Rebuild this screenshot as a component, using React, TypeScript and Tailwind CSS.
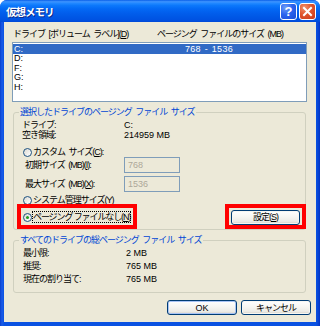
import React from "react";

const FONT = "font-['Liberation_Sans','Noto_Sans_CJK_JP',sans-serif]";
const NUM = "tracking-normal [word-spacing:0px]";

function U({ c }: { c: string }) {
  return <span className="underline underline-offset-[1px]">{c}</span>;
}

function Radio({ checked }: { checked?: boolean }) {
  return (
    <span className="w-[9px] h-[9px] rounded-full border border-[#1C5180] bg-[linear-gradient(135deg,#DCDBD3,#FFFFFF)] flex items-center justify-center shrink-0">
      {checked && <span className="w-[3px] h-[3px] rounded-full bg-[#21A121]" />}
    </span>
  );
}

function XPButton({ children, w, def }: { children: React.ReactNode; w: string; def?: boolean }) {
  return (
    <div
      className={`${w} h-[15px] rounded-[3px] border border-[#003C74] bg-[linear-gradient(180deg,#FFFFFF_0%,#F6F6F2_45%,#ECEBE6_80%,#D6D0C5_100%)] flex items-center justify-center text-black ${
        def ? "shadow-[inset_0_0_0_1px_#A8C4F5]" : "shadow-[inset_0_0_0_1px_#F6F6F2]"
      }`}
    >
      {children}
    </div>
  );
}

export default function App() {
  const rows = ["C:", "D:", "F:", "G:", "H:"];
  return (
    <div className={`${FONT} text-[9px] leading-[10px] text-black w-[320px] h-[326px] flex flex-col rounded-t-[7px] overflow-hidden bg-[linear-gradient(90deg,#0A3FCB_0px,#1A5BE8_2px,#0A52E2_4px,#0A52E2_316px,#0745D6_318px,#0333C4_320px)]`}>
      {/* Title bar */}
      <div className="h-[22px] shrink-0 flex items-center pl-[6px] pr-[4px] bg-[linear-gradient(180deg,#0A5FE8_0%,#3E95FF_8%,#2188FF_15%,#0C78FB_25%,#0369F5_40%,#0260EE_55%,#0058E6_75%,#0052E2_90%,#0049D8_100%)]">
        <span className="text-white font-bold text-[10.5px] tracking-[-1px] [text-shadow:1px_1px_0_#0A2A8A] mt-[1px]">仮想メモリ</span>
        <div className="ml-auto flex gap-[2px] mt-[1px]">
          <div className="w-[17px] h-[17px] rounded-[3px] border border-white bg-[radial-gradient(circle_at_30%_25%,#6E9EF8_0%,#2C64EE_45%,#1A4DD6_100%)] flex items-center justify-center">
            <span className="text-white font-bold text-[13px] leading-[13px] font-['Liberation_Sans',sans-serif]">?</span>
          </div>
          <div className="w-[17px] h-[17px] rounded-[3px] border border-white bg-[radial-gradient(circle_at_30%_25%,#F0926C_0%,#E0552D_45%,#C8391A_100%)] flex items-center justify-center">
            <svg width="11" height="11" viewBox="0 0 11 11">
              <path d="M2 2 L9 9 M9 2 L2 9" stroke="white" strokeWidth="2" strokeLinecap="square" />
            </svg>
          </div>
        </div>
      </div>

      {/* Client */}
      <div className="relative flex-1 mx-[4px] mb-[4px] bg-[#ECE9D8] pl-[8px] pr-[9px] pt-[7px] flex flex-col tracking-[-1px] [word-spacing:2px]">
        <div className="h-[10px] flex items-center">
          <span className="ml-[1px] w-[144px] shrink-0">ドライブ [ボリューム ラベル](<U c="D" />)</span>
          <span>ページング ファイルのサイズ (MB)</span>
        </div>

        <div className="mt-[3px] h-[60px] border border-[#7F9DB9] bg-white pt-[1px] flex flex-col">
          {rows.map((r, i) => (
            <div
              key={r}
              className={`h-[9.5px] flex items-center ${NUM} ${i === 0 ? "bg-[#316AC5] text-white" : ""}`}
            >
              <span className="pl-[1px] w-[172px] shrink-0">{r}</span>
              {i === 0 && <span className="tracking-[0.3px] [word-spacing:1px]">768 - 1536</span>}
            </div>
          ))}
        </div>

        {/* Group 1 */}
        <div className="relative mt-[10px] mx-[1px] border border-[#D0D0BF] rounded-[3px] pt-[7px] pl-[8px] pr-[5px] pb-[4px] flex flex-col">
          <span className="absolute left-[5px] top-[-6px] bg-[#ECE9D8] px-[1px] text-[#0046D5]">
            選択したドライブのページング ファイル サイズ
          </span>
          <div className="h-[10px] flex items-center">
            <span className="w-[102px] shrink-0">ドライブ:</span>
            <span className={NUM}>C:</span>
          </div>
          <div className="h-[10px] flex items-center">
            <span className="w-[102px] shrink-0">空き領域:</span>
            <span className={NUM}>214959 MB</span>
          </div>
          <div className="mt-[7px] h-[10px] flex items-center">
            <span className="ml-[1px]"><Radio /></span>
            <span className="ml-[1px]">カスタム サイズ(<U c="C" />):</span>
          </div>
          <div className="h-[16px] flex items-center">
            <span className="ml-[3px] w-[99px] shrink-0">初期サイズ (MB)(<U c="I" />):</span>
            <div className={`w-[56px] h-[16px] border border-[#7F9DB9] flex items-center pl-[3px] text-[#ACA899] ${NUM}`}>768</div>
          </div>
          <div className="mt-[3px] h-[16px] flex items-center">
            <span className="ml-[3px] w-[99px] shrink-0">最大サイズ (MB)(<U c="X" />):</span>
            <div className={`w-[56px] h-[16px] border border-[#7F9DB9] flex items-center pl-[3px] text-[#ACA899] ${NUM}`}>1536</div>
          </div>
          <div className="mt-[3px] h-[10px] flex items-center">
            <span className="ml-[1px]"><Radio /></span>
            <span className="ml-[1px]">システム管理サイズ(<U c="Y" />)</span>
          </div>
          <div className="mt-[4px] h-[16px] flex items-center justify-between">
            <div className="flex items-center">
              <span className="ml-[1px]"><Radio checked /></span>
              <span className="ml-[1px] [word-spacing:0px] tracking-[-1.1px] outline-dotted outline-1 outline-[#000] outline-offset-0">ページング ファイルなし(<U c="N" />)</span>
            </div>
            <XPButton w="w-[69px]">設定(<U c="S" />)</XPButton>
          </div>
        </div>

        {/* Group 2 */}
        <div className="relative mt-[10px] mx-[1px] border border-[#D0D0BF] rounded-[3px] pt-[5px] pl-[9px] pb-[7px] flex flex-col">
          <span className="absolute left-[5px] top-[-6px] bg-[#ECE9D8] px-[1px] text-[#0046D5]">
            すべてのドライブの総ページング ファイル サイズ
          </span>
          {[
            ["最小限:", "2 MB"],
            ["推奨:", "765 MB"],
            ["現在の割り当て:", "765 MB"],
          ].map(([k, v]) => (
            <div key={k} className="h-[13px] flex items-center">
              <span className="w-[103px] shrink-0">{k}</span>
              <span className={NUM}>{v}</span>
            </div>
          ))}
        </div>

        <div className="mt-[7px] mr-[-4px] flex justify-end gap-[4px]">
          <XPButton w="w-[70px]" def>
            <span className={NUM}>OK</span>
          </XPButton>
          <XPButton w="w-[70px]">キャンセル</XPButton>
        </div>

        {/* Red highlight annotations */}
        <div className="absolute left-[13px] top-[182px] w-[120px] h-[25px] border-[4px] border-[#FF0000] pointer-events-none" />
        <div className="absolute left-[221px] top-[182px] w-[81px] h-[25px] border-[4px] border-[#FF0000] pointer-events-none" />
      </div>
    </div>
  );
}
